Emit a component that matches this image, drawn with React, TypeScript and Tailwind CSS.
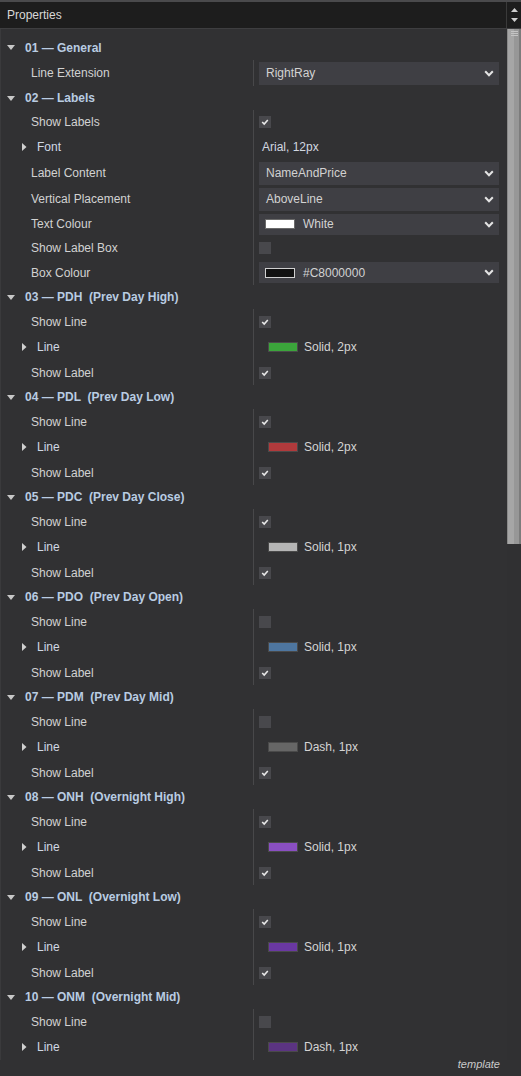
type Row =
  | { kind: "select"; label: string; value: string; h: number; swatch?: string; swatchBorder?: string }
  | { kind: "check"; label: string; checked: boolean; h: number }
  | { kind: "expand"; label: string; value: string; h: number; line?: string };

type Section = { title: string; h: number; rows: Row[] };

const lineSection = (title: string, showLine: boolean, color: string, style: string, last = false): Section => ({
  title,
  h: 24,
  rows: [
    { kind: "check", label: "Show Line", checked: showLine, h: 25 },
    { kind: "expand", label: "Line", value: style, line: color, h: 26 },
    ...(last ? [] : [{ kind: "check" as const, label: "Show Label", checked: true, h: 25 }]),
  ],
});

const sections: Section[] = [
  {
    title: "01 — General",
    h: 25,
    rows: [{ kind: "select", label: "Line Extension", value: "RightRay", h: 26 }],
  },
  {
    title: "02 — Labels",
    h: 24,
    rows: [
      { kind: "check", label: "Show Labels", checked: true, h: 24 },
      { kind: "expand", label: "Font", value: "Arial, 12px", h: 26 },
      { kind: "select", label: "Label Content", value: "NameAndPrice", h: 26 },
      { kind: "select", label: "Vertical Placement", value: "AboveLine", h: 26 },
      { kind: "select", label: "Text Colour", value: "White", swatch: "#ffffff", swatchBorder: "#6a6a6a", h: 24 },
      { kind: "check", label: "Show Label Box", checked: false, h: 24 },
      { kind: "select", label: "Box Colour", value: "#C8000000", swatch: "#111111", swatchBorder: "#d0d0d0", h: 25 },
    ],
  },
  lineSection("03 — PDH  (Prev Day High)", true, "#3ba53b", "Solid, 2px"),
  lineSection("04 — PDL  (Prev Day Low)", true, "#b03a3c", "Solid, 2px"),
  lineSection("05 — PDC  (Prev Day Close)", true, "#b5b5b5", "Solid, 1px"),
  lineSection("06 — PDO  (Prev Day Open)", false, "#4e76a0", "Solid, 1px"),
  lineSection("07 — PDM  (Prev Day Mid)", false, "#666666", "Dash, 1px"),
  lineSection("08 — ONH  (Overnight High)", true, "#8a4fc2", "Solid, 1px"),
  lineSection("09 — ONL  (Overnight Low)", true, "#6a38a2", "Solid, 1px"),
  lineSection("10 — ONM  (Overnight Mid)", false, "#5b3482", "Dash, 1px", true),
];

function Chevron() {
  return (
    <svg width="10" height="7" viewBox="0 0 10 7" className="shrink-0">
      <polyline points="1.2,1.2 5,5.2 8.8,1.2" fill="none" stroke="#e4e4e4" strokeWidth="2" />
    </svg>
  );
}

function Checkbox({ checked }: { checked: boolean }) {
  return (
    <div className="w-[12px] h-[12px] bg-[#48484c] flex items-center justify-center">
      {checked && (
        <svg width="12" height="12" viewBox="0 0 12 12">
          <polyline points="3.2,6 5.2,8 8.8,4" fill="none" stroke="#e8e8e8" strokeWidth="1.6" />
        </svg>
      )}
    </div>
  );
}

function Value({ row }: { row: Row }) {
  if (row.kind === "check") return <Checkbox checked={row.checked} />;
  if (row.kind === "expand") {
    if (row.line)
      return (
        <div className="flex items-center pl-[9px]">
          <div className="w-[30px] h-[10px] border border-[#4a4a4a]" style={{ background: row.line }} />
          <span className="ml-[6px] text-[#d4d4d4]">{row.value}</span>
        </div>
      );
    return <span className="pl-[3px] text-[#d2d8e0]">{row.value}</span>;
  }
  return (
    <div
      className={`w-[240px] bg-[#3f3f44] flex items-center justify-between pr-[5px] ${
        row.swatch ? "h-[21px] pl-[6px]" : "h-[23px] pl-[7px]"
      }`}
    >
      <div className="flex items-center">
        {row.swatch && (
          <div
            className="w-[30px] h-[10px] border mr-[8px]"
            style={{ background: row.swatch, borderColor: row.swatchBorder }}
          />
        )}
        <span className="text-[#d2d2d2]">{row.value}</span>
      </div>
      <Chevron />
    </div>
  );
}

function PropRow({ row }: { row: Row }) {
  const expand = row.kind === "expand";
  return (
    <div className="flex items-center" style={{ height: row.h }}>
      <div className="w-[253px] h-full border-r border-[#48484a] flex items-center">
        {expand ? (
          <>
            <svg width="5" height="8" viewBox="0 0 5 8" className="ml-[21px]">
              <polygon points="0,0 4.5,4 0,8" fill="#d0d0d0" />
            </svg>
            <span className="ml-[10px] text-[#d0d8e4]">{row.label}</span>
          </>
        ) : (
          <span className="ml-[30px] text-[#d2d2d2]">{row.label}</span>
        )}
      </div>
      <div className="flex-1 pl-[5px] flex items-center">
        <Value row={row} />
      </div>
    </div>
  );
}

export default function App() {
  return (
    <div
      className="w-[521px] h-[1076px] bg-[#313133] flex flex-col overflow-hidden text-[12px] leading-none"
      style={{ fontFamily: '"Liberation Sans", Arial, sans-serif' }}
    >
      <div className="h-[2px] bg-[#4a4a4c]" />
      <div className="h-[27px] bg-[#1d1d1d] flex border-b border-[#3e3e40]">
        <div className="flex-1 flex items-center pl-[7px] text-[#d8d8d8]">Properties</div>
        <div className="w-[15px] border-l border-[#3a3a3a] flex flex-col items-center justify-center gap-[6px]">
          <svg width="7" height="4" viewBox="0 0 7 4">
            <polygon points="0,4 3.5,0 7,4" fill="#cfcfcf" />
          </svg>
          <svg width="7" height="4" viewBox="0 0 7 4">
            <polygon points="0,0 3.5,4 7,0" fill="#cfcfcf" />
          </svg>
        </div>
      </div>
      <div className="flex-1 flex min-h-0 border-l border-[#3a3a3c]">
        <div className="flex-1 overflow-hidden pt-[6px]">
          {sections.map((s) => (
            <div key={s.title}>
              <div className="flex items-center" style={{ height: s.h }}>
                <svg width="8" height="5" viewBox="0 0 8 5" className="ml-[6px]">
                  <polygon points="0,0 8,0 4,5" fill="#c8c8c8" />
                </svg>
                <span className="ml-[10px] font-bold text-[#b9cce2] whitespace-pre">{s.title}</span>
              </div>
              {s.rows.map((r) => (
                <PropRow key={r.label} row={r} />
              ))}
            </div>
          ))}
        </div>
        <div className="w-[14px] flex flex-col">
          <div className="h-[515px] flex">
            <div className="w-[1px] bg-[#8a8a8a]" />
            <div className="w-[6px] bg-[#a6a6a6] relative">
              <div className="absolute left-[3px] top-[2px] w-[7px] flex flex-col gap-[1px]">
                <div className="h-[1px] bg-[#c4c4c4]" />
                <div className="h-[1px] bg-[#c4c4c4]" />
                <div className="h-[1px] bg-[#c4c4c4]" />
              </div>
            </div>
            <div className="w-[5px] bg-[#979797]" />
            <div className="w-[2px] bg-[#7c7c7c]" />
          </div>
          <div className="flex-1 bg-[#303032]" />
        </div>
      </div>
      <div className="h-[16px] flex justify-end pr-[21px]">
        <span className="italic text-[11px] text-[#cacaca] leading-[12px] -mt-[2px]">template</span>
      </div>
    </div>
  );
}
